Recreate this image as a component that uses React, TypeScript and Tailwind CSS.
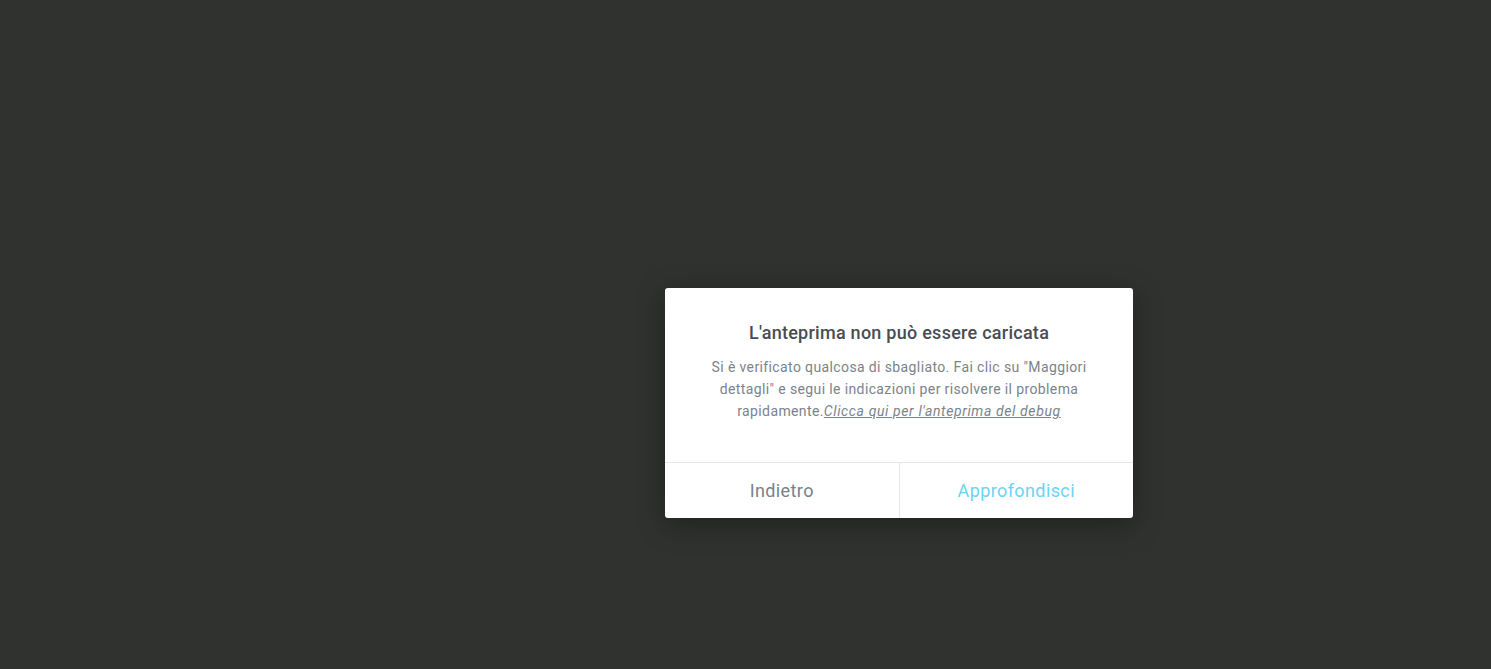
export default function App() {
  return (
    <div
      className="h-[669px] w-full overflow-hidden bg-[#303230] pl-[665px] pt-[288px]"
      style={{ fontFamily: "Roboto, 'Noto Sans', sans-serif" }}
    >
      {/* Error dialog */}
      <div className="w-[468px] overflow-hidden rounded-[3px] bg-white shadow-[0_6px_28px_rgba(0,0,0,0.35)]">
        <div className="px-8 pb-10 pt-8 text-center">
          <h2 className="text-[18px] font-medium leading-[26px] tracking-[0.26px] text-[#484d53]">
            L'anteprima non può essere caricata
          </h2>
          <p className="mt-2.5 text-[14px] leading-[22px] tracking-[0.38px] text-[#7b838c]">
            Si è verificato qualcosa di sbagliato. Fai clic su "Maggiori dettagli" e segui le
            indicazioni per risolvere il problema rapidamente.
            <a href="#" className="italic underline tracking-[0.62px]">
              Clicca qui per l'anteprima del debug
            </a>
          </p>
        </div>
        <div className="flex h-14 border-t border-[#e3e6ea]">
          <button className="flex-1 text-[18px] tracking-[0.4px] text-[#78828c]">Indietro</button>
          <button className="flex-1 border-l border-[#e3e6ea] text-[18px] tracking-[0.4px] text-[#6dd3f5]">
            Approfondisci
          </button>
        </div>
      </div>
    </div>
  );
}
